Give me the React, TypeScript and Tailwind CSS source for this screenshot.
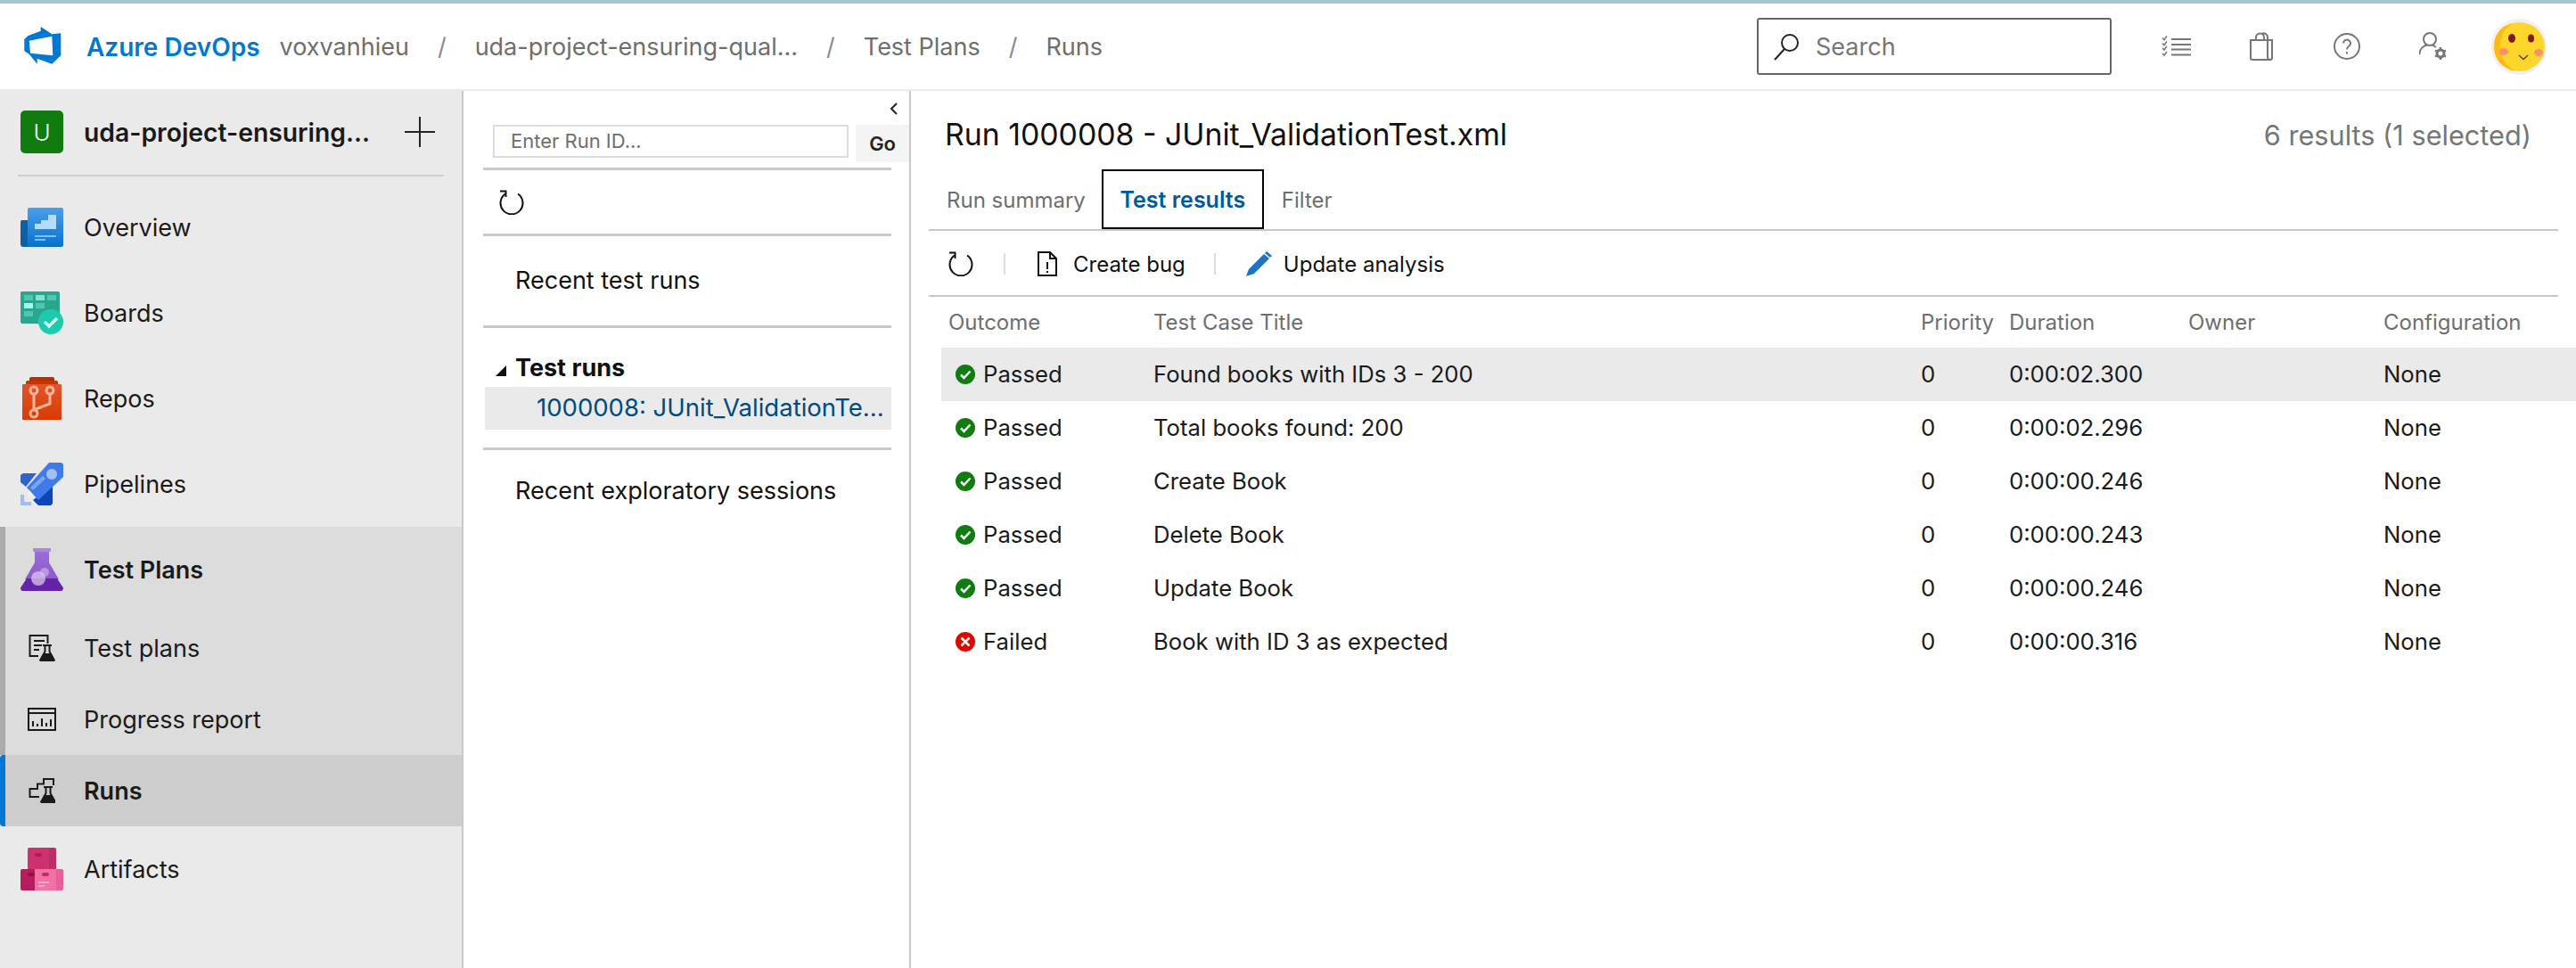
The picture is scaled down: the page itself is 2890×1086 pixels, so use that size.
import React from 'react';

const font = "font-['Inter','Noto_Sans',sans-serif]";

const AzureLogo = () => (
  <svg width="44" height="44" viewBox="0 0 44 44">
    <path
      fill="#0078d4"
      fillRule="evenodd"
      d="M19.700 0 32.300 8.300 42.300 7.300V32.300L32.300 41.700 15.700 35.700V41.700L6.700 30.700 1.300 27.300V14L5.700 10 19.700 4.700zM6.700 15.700 8 29.700 33.300 32.300 32.300 10.700z"
    />
  </svg>
);

const OverviewIcon = () => (
  <svg width="48" height="44" viewBox="0 0 48 44">
    <defs>
      <linearGradient id="ov" x1="0" y1="0" x2="0" y2="1">
        <stop offset="0" stopColor="#4a9fe8" />
        <stop offset="1" stopColor="#0672cf" />
      </linearGradient>
    </defs>
    <path fill="#0f5ea8" d="M2 14h10v30H3a3 3 0 0 1-3-3V16a2 2 0 0 1 2-2z" />
    <path fill="url(#ov)" d="M10 0h36a2 2 0 0 1 2 2v40a2 2 0 0 1-2 2H8V2a2 2 0 0 1 2-2z" />
    <path fill="#b5dcfb" d="M16 18h7v-4h8V8h9v16H16z" />
    <path fill="#7fc0f4" d="M16 31h24v2H16zM16 35h12v2H16z" />
  </svg>
);

const BoardsIcon = () => (
  <svg width="48" height="48" viewBox="0 0 48 48">
    <rect width="44" height="36" rx="2" fill="#2aa68e" />
    <path fill="#4cc9b0" d="M4 4h10v6H4zM30 4h10v6H30zM17 13h10v6H17zM4 22h10v6H4z" />
    <path fill="#7fe3d0" d="M17 4h10v6H17z" />
    <path fill="#a0fbe7" d="M4 13h10v6H4z" />
    <circle cx="34" cy="34" r="14" fill="#1ccbae" />
    <path d="m27 34 5 5 9-9" fill="none" stroke="#d8fff5" strokeWidth="3.5" />
  </svg>
);

const ReposIcon = () => (
  <svg width="44" height="48" viewBox="0 0 44 48">
    <defs>
      <linearGradient id="rp" x1="0" y1="0" x2="0" y2="1">
        <stop offset="0" stopColor="#e0552a" />
        <stop offset="1" stopColor="#d83b01" />
      </linearGradient>
    </defs>
    <rect x="8" width="28" height="8" rx="2" fill="#b52f00" />
    <rect x="4" y="4" width="36" height="10" rx="2" fill="#c73600" />
    <rect y="8" width="44" height="40" rx="1" fill="url(#rp)" />
    <g fill="none" stroke="#ffb59b" strokeWidth="3">
      <circle cx="13" cy="15" r="4" />
      <circle cx="31" cy="15" r="4" />
      <circle cx="13" cy="41" r="4" />
      <path d="M13 19v18M15 36l16-6v-11" />
    </g>
  </svg>
);

const PipelinesIcon = () => (
  <svg width="48" height="48" viewBox="0 0 48 48">
    <path fill="#2f62cc" d="M0 14l3-2h15L6 27 0 22z" />
    <path fill="#0f45b5" d="M36 26v20l-2 2H20l-6-6z" />
    <path fill="#3f7be8" d="M46 0l2 2v14L20 42 7 28 32 0z" />
    <circle cx="35" cy="13" r="6" fill="#a3c0f5" />
    <path fill="#7fa5f0" d="m11 28 14-13 3 3-14 13z" />
    <path fill="#f2f6ff" d="m10 31 4 5-3 2-3-4z" />
    <path fill="#9bbcf8" d="M0 36h4v8h8v4H0z" />
  </svg>
);

const TestPlansIcon = () => (
  <svg width="48" height="48" viewBox="0 0 48 48">
    <defs>
      <linearGradient id="tp" x1="0" y1="0" x2="0" y2="1">
        <stop offset="0" stopColor="#9a6cd8" />
        <stop offset="1" stopColor="#8a5cc9" />
      </linearGradient>
    </defs>
    <rect x="14" width="20" height="4" rx="1" fill="#ab85df" />
    <path fill="url(#tp)" d="M16 4h16v12l11 19H5L16 16z" />
    <path fill="#6423a8" d="M7 34h34l6 9a3 3 0 0 1-3 5H4a3 3 0 0 1-3-5z" />
    <circle cx="20" cy="34" r="8" fill="#d9c5f2" fillOpacity="0.75" />
    <circle cx="27" cy="27" r="5" fill="#d9c5f2" fillOpacity="0.55" />
  </svg>
);

const ArtifactsIcon = () => (
  <svg width="48" height="48" viewBox="0 0 48 48">
    <path fill="#cf3170" d="M10 0h24v24H8V2a2 2 0 0 1 2-2z" />
    <path fill="#bd2e67" d="M32 0h6a2 2 0 0 1 2 2v22h-8z" />
    <rect x="16" y="6" width="8" height="4" rx="2" fill="#a91e58" />
    <path fill="#b71c5c" d="M2 24h16v24H2a2 2 0 0 1-2-2V26a2 2 0 0 1 2-2z" />
    <path fill="#f272a6" d="M16 24h24v24H16z" />
    <path fill="#e75f97" d="M40 24h6a2 2 0 0 1 2 2v20a2 2 0 0 1-2 2h-6z" />
    <rect x="8" y="28" width="8" height="4" rx="2" fill="#8d1349" />
    <rect x="24" y="28" width="8" height="4" rx="2" fill="#c42a68" />
    <path fill="#ffa9cc" d="M20 38h12v2H20zM20 42h7v2H20z" />
  </svg>
);

const SubFlask = ({ x, y }: { x: number; y: number }) => (
  <g transform={`translate(${x} ${y})`}>
    <path d="M4 1h10M6.500 1v7L1.500 17h15l-5-9V1" fill="none" stroke="#1a1a1a" strokeWidth="2" />
    <path d="M4.500 10h9l4 7.500a1 1 0 0 1-1 1.500h-15a1 1 0 0 1-1-1.500z" fill="#1a1a1a" />
  </g>
);

const TestPlanSubIcon = () => (
  <svg width="30" height="30" viewBox="0 0 30 30">
    <path d="M11 24H1.500V1h20v9" fill="none" stroke="#1a1a1a" strokeWidth="2" />
    <path d="M6 7h12M6 12h9M6 17h6" stroke="#1a1a1a" strokeWidth="2" />
    <SubFlask x={12} y={11} />
  </svg>
);

const ProgressIcon = () => (
  <svg width="32" height="26" viewBox="0 0 32 26" fill="none" stroke="#1a1a1a" strokeWidth="2">
    <rect x="1" y="1" width="30" height="24" />
    <path d="M1 6h30M6 21v-6M11 21v-3M16 21v-9M21 21v-4M26 21v-8" />
  </svg>
);

const RunsSubIcon = () => (
  <svg width="30" height="28" viewBox="0 0 30 28">
    <path d="M12 21H1.500v-9h8.500V6.500h7V1h11v7" fill="none" stroke="#1a1a1a" strokeWidth="2" />
    <SubFlask x={13} y={9} />
  </svg>
);

const RefreshIcon = () => (
  <svg width="28" height="28" viewBox="0 0 28 28" fill="none" stroke="#111" strokeWidth="2">
    <path d="M7 4.500a12.500 12.500 0 1 0 14 0" />
    <path d="M1 1.500h6.500V8" />
  </svg>
);

const PassedIcon = () => (
  <svg width="22" height="22" viewBox="0 0 22 22">
    <circle cx="11" cy="11" r="11" fill="#107c10" />
    <path d="m6 11.500 3.500 3.500 7-7.500" fill="none" stroke="#fff" strokeWidth="2.500" />
  </svg>
);

const FailedIcon = () => (
  <svg width="22" height="22" viewBox="0 0 22 22">
    <circle cx="11" cy="11" r="11" fill="#da0a00" />
    <path d="m6.500 6.500 9 9m0-9-9 9" fill="none" stroke="#fff" strokeWidth="2.500" />
  </svg>
);

const TopIcons = () => (
  <div className="flex items-center">
    <svg className="ml-[56px]" width="34" height="24" viewBox="0 0 34 24" fill="none" stroke="#767676">
      <path d="M11 4h22M11 10h22M11 15.500h22M11 21.500h22" strokeWidth="2" />
      <path d="m1 2.500 2 2 3-4M1 8.500l2 2 3-4M1 14l2 2 3-4M1 20l2 2 3-4" strokeWidth="1.500" />
    </svg>
    <svg className="ml-[65px]" width="26" height="32" viewBox="0 0 26 32" fill="none" stroke="#767676" strokeWidth="2">
      <path d="M1 9h24v20a2 2 0 0 1-2 2H3a2 2 0 0 1-2-2zM20 9v19a3 3 0 0 0 3 3" />
      <path d="M7 9V6a4.500 4.500 0 0 1 9 0v3M13 2a4.500 4.500 0 0 1 7 4v3" />
    </svg>
    <svg className="ml-[68px]" width="30" height="30" viewBox="0 0 30 30" fill="none" stroke="#767676" strokeWidth="2">
      <circle cx="15" cy="15" r="14" />
      <path d="M11 11.500a4 4 0 1 1 6 3.500c-1.500 1-2 1.500-2 3.500" />
      <path d="M15 21v2.500" />
    </svg>
    <svg className="ml-[66px]" width="32" height="32" viewBox="0 0 32 32" fill="none" stroke="#767676" strokeWidth="2">
      <circle cx="12" cy="8" r="7" />
      <path d="M0.500 25c0-6 4-9.500 8.500-10.500M15 14.500l4 2.500" />
      <circle cx="24" cy="24" r="4" strokeWidth="3" />
      <path d="M24 17v2M24 29v2M18 20.500l2 1M28 26.500l2 1M18 27.500l2-1M28 21.500l2-1" strokeWidth="2.500" />
    </svg>
    <div className="ml-[49px] flex h-[63px] w-[62px] items-center justify-center rounded-full bg-[#f0f0f0]">
      <svg width="57" height="55" viewBox="0 0 57 55" className="block">
        <ellipse cx="28.500" cy="27.500" rx="28.500" ry="27.500" fill="#fdd62c" />
        <path d="M22 1C8 3 0 14 0 27.500S9 52 24 54.500C13 49 7 39 7 27S12 6 22 1z" fill="#fabb16" />
        <ellipse cx="20" cy="18" rx="4" ry="5" fill="#7c1d12" />
        <ellipse cx="41.500" cy="18" rx="3.500" ry="4.500" fill="#7c1d12" />
        <ellipse cx="11" cy="33" rx="5" ry="4" fill="#fb8f6b" />
        <ellipse cx="50" cy="34" rx="5" ry="4" fill="#fb8f6b" />
        <path d="m28 37 5 4.500 5-4.500" fill="none" stroke="#6b3a10" strokeWidth="1.500" />
      </svg>
    </div>
  </div>
);

const Crumb = ({ text }: { text: string }) => <span className="pt-[2px] text-[#6e6e6e]">{text}</span>;
const Slash = () => <span className="mx-[32px] pt-[2px] text-[#8a8a8a]">/</span>;

const TopBar = () => (
  <header className="flex h-[102px] shrink-0 items-center border-b-2 border-b-[#ececec] border-t-4 border-t-[#a7c5cf] bg-white text-[27px]">
    <div className="ml-[26px]"><AzureLogo /></div>
    <span className="ml-[27px] pt-[2px] text-[28px] font-semibold text-[#0078d4]">Azure DevOps</span>
    <span className="ml-[22px] pt-[2px] text-[#6e6e6e]">voxvanhieu</span>
    <Slash />
    <Crumb text="uda-project-ensuring-qual..." />
    <Slash />
    <Crumb text="Test Plans" />
    <Slash />
    <Crumb text="Runs" />
    <div className="ml-auto mr-[33px] flex items-center">
      <div className="flex h-[64px] w-[398px] items-center rounded-[3px] border-2 border-[#666666] pl-[16px] text-[#767676]">
        <svg width="32" height="32" viewBox="0 0 32 32" fill="none" stroke="#222" strokeWidth="2">
          <circle cx="19" cy="12" r="9" />
          <path d="M13 19 2 31" />
        </svg>
        <span className="ml-[16px] pt-[2px]">Search</span>
      </div>
      <TopIcons />
    </div>
  </header>
);

type NavProps = { icon: React.ReactNode; label: string; bold?: boolean; sub?: boolean; selected?: boolean };

const NavItem = ({ icon, label, bold, sub, selected }: NavProps) => (
  <div className={`flex items-center pl-[23px] ${sub ? 'h-[80px]' : 'h-[96px]'} ${selected ? 'rounded-l-[4px] bg-[#cdcdcd]' : ''}`}>
    <div className="flex w-[48px] shrink-0 justify-center">{icon}</div>
    <span className={`ml-[23px] pt-[2px] text-[27px] text-[#1a1a1a] ${bold ? 'font-semibold' : ''}`}>{label}</span>
  </div>
);

const Sidebar = () => (
  <aside className="w-[520px] shrink-0 border-r-2 border-r-[#c8c8c8] bg-[#eaeaea]">
    <div className="mx-[20px] flex h-[96px] items-center border-b-2 border-b-[#cfcfcf] pb-[2px]">
      <div className="ml-[3px] flex h-[48px] w-[48px] items-center justify-center rounded-[5px] bg-[#107c10] text-[26px] font-light text-white">U</div>
      <span className="ml-[23px] pt-[2px] text-[28.3px] font-semibold text-[#1a1a1a]">uda-project-ensuring...</span>
      <svg className="ml-auto mr-[10px]" width="34" height="34" viewBox="0 0 34 34" stroke="#222" strokeWidth="2">
        <path d="M17 0v34M0 17h34" />
      </svg>
    </div>
    <div className="mt-[9px]">
      <NavItem icon={<OverviewIcon />} label="Overview" />
      <NavItem icon={<BoardsIcon />} label="Boards" />
      <NavItem icon={<ReposIcon />} label="Repos" />
      <NavItem icon={<PipelinesIcon />} label="Pipelines" />
    </div>
    <div className="relative bg-[#dcdcdc]">
      <div className="absolute bottom-[80px] left-0 top-0 w-[6px] bg-[#aaaaaa]" />
      <NavItem icon={<TestPlansIcon />} label="Test Plans" bold />
      <NavItem icon={<TestPlanSubIcon />} label="Test plans" sub />
      <NavItem icon={<ProgressIcon />} label="Progress report" sub />
      <div className="relative">
        <div className="absolute bottom-0 left-0 top-0 w-[6px] rounded-l-[4px] bg-[#0078d4]" />
        <NavItem icon={<RunsSubIcon />} label="Runs" bold sub selected />
      </div>
    </div>
    <NavItem icon={<ArtifactsIcon />} label="Artifacts" />
  </aside>
);

const RunsPanel = () => (
  <section className="relative w-[502px] shrink-0 border-r-2 border-r-[#c8c8c8] bg-white pl-[22px] pr-[20px]">
    <svg className="absolute right-[9px] top-[10px]" width="16" height="20" viewBox="0 0 16 20" fill="none" stroke="#222" strokeWidth="2">
      <path d="m11 4-6 6 6 6" />
    </svg>
    <div className="flex h-[89px] items-start border-b-[3px] border-b-[#c8c8c8] pl-[11px] pt-[38px]">
      <div className="flex h-[37px] w-[400px] items-center border-2 border-[#dcdcdc] pl-[18px] text-[22px] text-[#6e6e6e]">Enter Run ID...</div>
      <div className="-mr-[20px] ml-[8px] flex h-[42px] w-[60px] items-center justify-center bg-[#f4f4f4] text-[22px] font-semibold text-[#222]">Go</div>
    </div>
    <div className="flex h-[74px] items-center border-b-[3px] border-b-[#c8c8c8] pl-[18px]"><RefreshIcon /></div>
    <div className="flex h-[103px] items-center border-b-[3px] border-b-[#c8c8c8] pl-[36px] text-[27px] text-[#111]">Recent test runs</div>
    <div className="flex h-[66px] items-center pt-[24px] text-[27px] font-bold text-[#111]">
      <svg className="ml-[14px] mt-[6px]" width="12" height="12" viewBox="0 0 12 12"><path d="M12 0v12H0z" fill="#111" /></svg>
      <span className="ml-[10px]">Test runs</span>
    </div>
    <div className="ml-[2px] flex h-[48px] items-center overflow-hidden whitespace-nowrap bg-[#eaeaea] pl-[58px] text-[27.5px] text-[#004b80]">1000008: JUnit_ValidationTe...</div>
    <div className="h-[23px] border-b-[3px] border-b-[#c8c8c8]" />
    <div className="flex h-[93px] items-center pl-[36px] text-[27px] text-[#111]">Recent exploratory sessions</div>
  </section>
);

const rows = [
  { outcome: 'Passed', title: 'Found books with IDs 3 - 200', duration: '0:00:02.300' },
  { outcome: 'Passed', title: 'Total books found: 200', duration: '0:00:02.296' },
  { outcome: 'Passed', title: 'Create Book', duration: '0:00:00.246' },
  { outcome: 'Passed', title: 'Delete Book', duration: '0:00:00.243' },
  { outcome: 'Passed', title: 'Update Book', duration: '0:00:00.246' },
  { outcome: 'Failed', title: 'Book with ID 3 as expected', duration: '0:00:00.316' },
];

const cols = 'grid grid-cols-[230px_861px_99px_201px_219px_1fr]';

const ResultsPanel = () => (
  <main className="min-w-0 flex-1 bg-white">
    <div className="mx-[20px]">
      <div className="flex h-[88px] items-center justify-between pl-[18px] pr-[30px] pt-[10px]">
        <h1 className="text-[33.8px] text-[#111]">Run 1000008 - JUnit_ValidationTest.xml</h1>
        <span className="pt-[2px] text-[30.7px] text-[#767676]">6 results (1 selected)</span>
      </div>
      <div className="flex h-[69px] items-stretch border-b-2 border-b-[#c8c8c8] pl-[20px] text-[24px]">
        <span className="mr-[18px] flex items-center pt-[2px] text-[#6e6e6e]">Run summary</span>
        <span className="flex w-[182px] items-center justify-center border-2 border-black pt-[2px] text-[25px] font-semibold text-[#005a9e]">Test results</span>
        <span className="ml-[20px] flex items-center pt-[2px] text-[#6e6e6e]">Filter</span>
      </div>
      <div className="flex h-[74px] items-center border-b-2 border-b-[#c8c8c8] pl-[22px] pt-[2px] text-[24px] text-[#111]">
        <RefreshIcon />
        <div className="ml-[34px] h-[24px] w-[2px] bg-[#dddddd]" />
        <svg className="ml-[36px]" width="22" height="28" viewBox="0 0 22 28" fill="none" stroke="#111" strokeWidth="2">
          <path d="M1 1h13l7 7v19H1zM14 1v7h7M11 12v8M11 22v2" />
        </svg>
        <span className="ml-[18px] pt-[2px]">Create bug</span>
        <div className="ml-[32px] h-[24px] w-[2px] bg-[#dddddd]" />
        <svg className="ml-[34px]" width="30" height="28" viewBox="0 0 30 28">
          <path d="m0 28 3-8L20 3l6 5L9 25z" fill="#1a75c9" />
          <path d="m23 0 6 5-2 2-6-5z" fill="#1a75c9" />
        </svg>
        <span className="ml-[12px] pt-[2px]">Update analysis</span>
      </div>
    </div>
    <div className={`${cols} ml-[42px] h-[57px] items-center text-[24px] text-[#6e6e6e]`}>
      <span>Outcome</span>
      <span>Test Case Title</span>
      <span>Priority</span>
      <span>Duration</span>
      <span>Owner</span>
      <span>Configuration</span>
    </div>
    <div className="ml-[34px]">
      {rows.map((row, i) => (
        <div key={row.title} className={`${cols} h-[60px] items-center pl-[8px] pt-[1px] text-[25.7px] text-[#1a1a1a] ${i === 0 ? 'bg-[#eaeaea]' : ''}`}>
          <span className="flex items-center gap-[9px] pl-[8px]">
            {row.outcome === 'Passed' ? <PassedIcon /> : <FailedIcon />}
            {row.outcome}
          </span>
          <span>{row.title}</span>
          <span>0</span>
          <span>{row.duration}</span>
          <span />
          <span>None</span>
        </div>
      ))}
    </div>
  </main>
);

export default function App() {
  return (
    <div className={`${font} flex h-[1086px] w-[2890px] flex-col overflow-hidden bg-white`}>
      <TopBar />
      <div className="flex min-h-0 flex-1">
        <Sidebar />
        <RunsPanel />
        <ResultsPanel />
      </div>
    </div>
  );
}
